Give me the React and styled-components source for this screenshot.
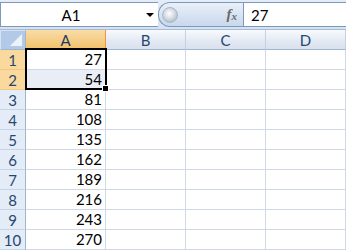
import styled, { createGlobalStyle } from 'styled-components';

const GlobalStyle = createGlobalStyle`
  body {
    margin: 0;
    background: #ffffff;
    font-family: "Lato", "Liberation Sans", sans-serif;
  }
`;

const values = [27, 54, 81, 108, 135, 162, 189, 216, 243, 270];
const columns = ['A', 'B', 'C', 'D'];

export default function App() {
  return (
    <Sheet>
      <GlobalStyle />
      <Toolbar>
        <NameBox>
          <span>A1</span>
          <Arrow />
        </NameBox>
        <Pill>
          <RoundButton />
          <Fx>
            <i>f</i>
            <sub>x</sub>
          </Fx>
        </Pill>
        <FormulaInput>27</FormulaInput>
      </Toolbar>
      <Grid>
        <Corner>
          <Triangle />
        </Corner>
        {columns.map((c) => (
          <ColHeader key={c} $active={c === 'A'}>
            {c}
          </ColHeader>
        ))}
        {values.map((v, i) => (
          <Row key={v}>
            <RowHeader $active={i < 2}>{i + 1}</RowHeader>
            <Cell $tint={i === 1}>{v}</Cell>
            <Cell />
            <Cell />
            <Cell />
          </Row>
        ))}
        <Selection>
          <Handle />
        </Selection>
      </Grid>
    </Sheet>
  );
}

const Sheet = styled.div`
  width: 346px;
  height: 251px;
  overflow: hidden;
  background: #ffffff;
`;

const Toolbar = styled.div`
  height: 29px;
  box-sizing: border-box;
  display: flex;
  align-items: stretch;
  padding: 2px 0 2px 0;
  background: linear-gradient(#e4ecf7, #d6e1f0);
`;

const NameBox = styled.div`
  width: 158px;
  box-sizing: border-box;
  background: #ffffff;
  border: 1px solid #7d98bd;
  border-right: none;
  display: flex;
  align-items: center;
  font-size: 15px;
  color: #000000;
  span {
    width: 140px;
    text-align: center;
  }
`;

const Arrow = styled.div`
  width: 0;
  height: 0;
  border-left: 4px solid transparent;
  border-right: 4px solid transparent;
  border-top: 4px solid #000000;
  margin-left: 5px;
`;

const Pill = styled.div`
  width: 85px;
  box-sizing: border-box;
  display: flex;
  align-items: center;
  justify-content: space-between;
  padding: 0 6px 0 3px;
  border: 1px solid #7d98bd;
  border-right: none;
  border-radius: 12px 0 0 12px;
  background: linear-gradient(#e9f0f9, #c9d8ec);
`;

const RoundButton = styled.div`
  width: 14px;
  height: 14px;
  border-radius: 50%;
  background: radial-gradient(circle at 45% 40%, #ffffff 0%, #d4dbe3 45%, #9aa7b6 100%);
  border: 1px solid #a8b8cc;
`;

const Fx = styled.div`
  font-family: "Liberation Serif", serif;
  color: #6a6a6a;
  font-size: 15px;
  font-weight: bold;
  i {
    font-style: italic;
  }
  sub {
    font-size: 11px;
    font-style: italic;
    vertical-align: -1px;
  }
`;

const FormulaInput = styled.div`
  flex: 1;
  background: #ffffff;
  border: 1px solid #7d98bd;
  border-right: none;
  display: flex;
  align-items: center;
  padding-left: 7px;
  font-size: 15px;
  color: #000000;
`;

const Grid = styled.div`
  position: relative;
  display: grid;
  grid-template-columns: 26px repeat(4, 80px);
  grid-template-rows: 20px;
  grid-auto-rows: 20px;
  border-top: 1px solid #a6bcd6;
`;

const Row = styled.div`
  display: contents;
`;

const Corner = styled.div`
  position: relative;
  box-sizing: border-box;
  background: #b3c9e8;
  border: 1px solid #d7e3f3;
  border-right: 1px solid #9eb6ce;
  border-bottom: 1px solid #9eb6ce;
`;

const Triangle = styled.div`
  position: absolute;
  right: 3px;
  bottom: 3px;
  width: 0;
  height: 0;
  border-left: 12px solid transparent;
  border-bottom: 12px solid #eef3fa;
`;

const ColHeader = styled.div`
  box-sizing: border-box;
  display: flex;
  align-items: center;
  justify-content: center;
  font-size: 15px;
  color: ${(p) => (p.$active ? '#1f3a63' : '#27466f')};
  background: ${(p) =>
    p.$active
      ? 'linear-gradient(#f9dca7, #f1c16a)'
      : 'linear-gradient(#f8fafd, #e4eaf4 55%, #d9e1ee)'};
  border-right: 1px solid ${(p) => (p.$active ? '#f29536' : '#c5d1e3')};
  border-bottom: 1px solid ${(p) => (p.$active ? '#f29536' : '#9eb6ce')};
`;

const RowHeader = styled.div`
  box-sizing: border-box;
  display: flex;
  align-items: center;
  justify-content: center;
  font-size: 15px;
  color: #27466f;
  background: ${(p) => (p.$active ? '#f9d99d' : '#e4ecf7')};
  border-right: 1px solid ${(p) => (p.$active ? '#f29536' : '#9eb6ce')};
  border-bottom: 1px solid ${(p) => (p.$active ? '#f7c77a' : '#c5d5e8')};
`;

const Cell = styled.div`
  box-sizing: border-box;
  display: flex;
  align-items: flex-end;
  justify-content: flex-end;
  padding: 0 3px 1px 0;
  font-size: 15px;
  color: #000000;
  background: ${(p) => (p.$tint ? '#e8edf6' : '#ffffff')};
  border-right: 1px solid #d0d7e5;
  border-bottom: 1px solid #d0d7e5;
`;

const Selection = styled.div`
  position: absolute;
  left: 25px;
  top: 18px;
  width: 82px;
  height: 42px;
  box-sizing: border-box;
  border: 2px solid #000000;
  pointer-events: none;
`;

const Handle = styled.div`
  position: absolute;
  right: -4px;
  bottom: -4px;
  width: 5px;
  height: 5px;
  background: #000000;
  border: 1px solid #ffffff;
`;
